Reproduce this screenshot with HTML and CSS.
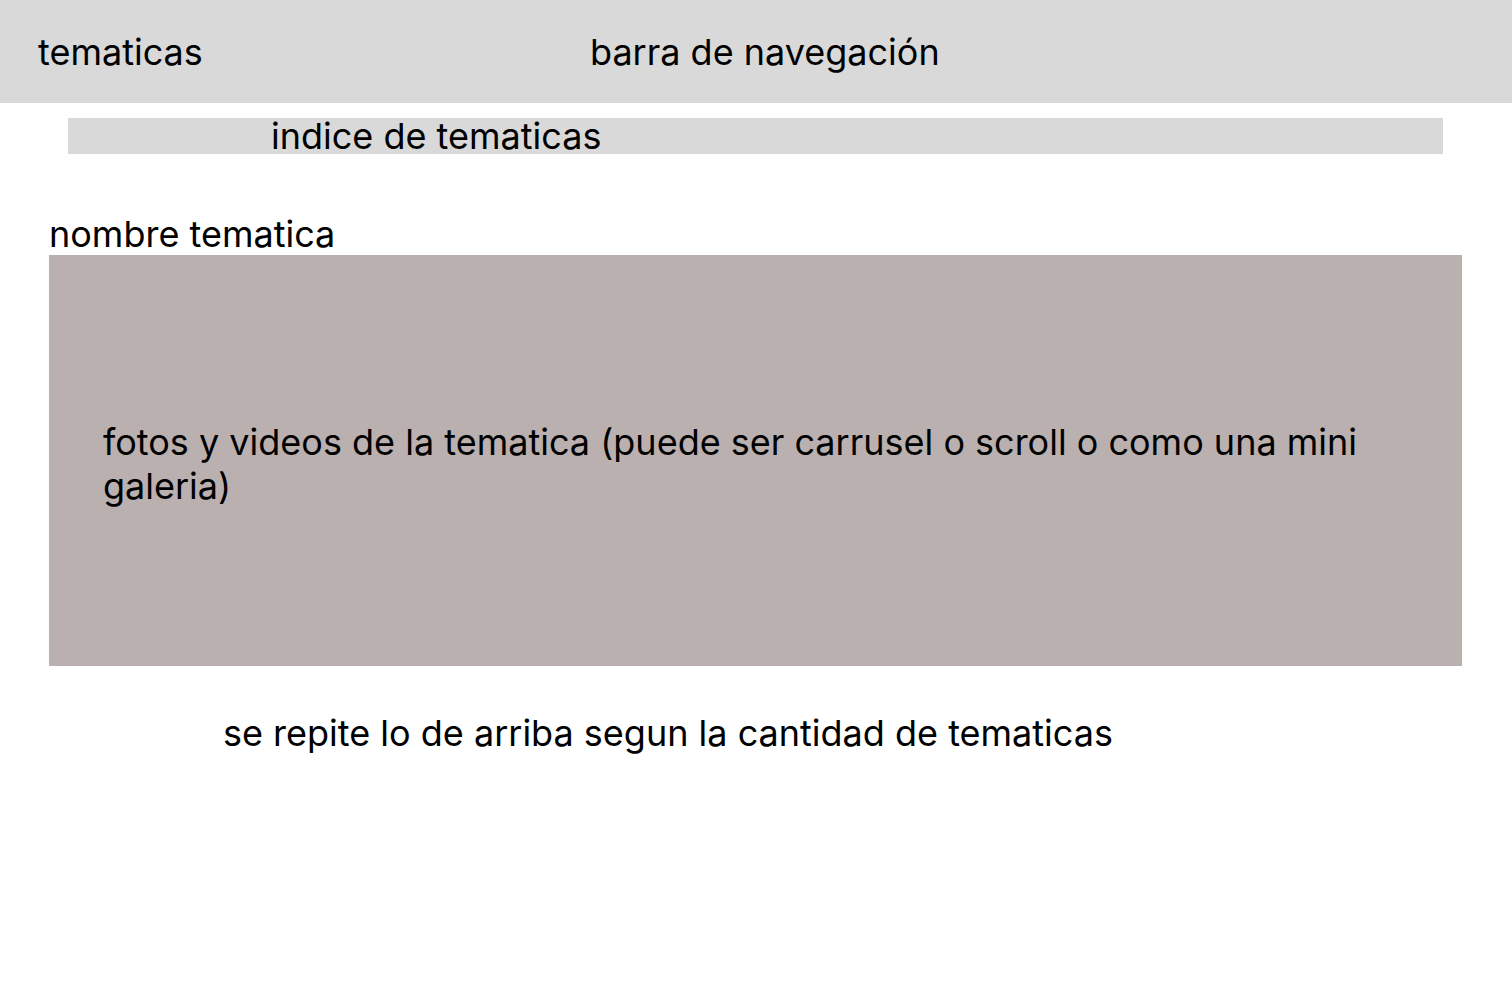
FILE: index.html
```html
<!DOCTYPE html>
<html lang="es">
<head>
<meta charset="utf-8">
<title>tematicas</title>
<link rel="stylesheet" href="styles.css">
</head>
<body>
<header class="navbar">
  <span class="nav-title">tematicas</span>
  <span class="nav-label">barra de navegación</span>
</header>
<nav class="index-bar">indice de tematicas</nav>
<section class="topic">
  <h2 class="topic-name">nombre tematica</h2>
  <div class="gallery">
    <p class="gallery-text">fotos y videos de la tematica (puede ser carrusel o scroll o como una mini galeria)</p>
  </div>
</section>
<p class="repeat-note">se repite lo de arriba segun la cantidad de tematicas</p>
</body>
</html>
```
FILE: styles.css
```css
html, body {
  margin: 0;
  padding: 0;
  background: #ffffff;
}
body {
  font-family: Inter, "Liberation Sans", sans-serif;
  font-size: 36px;
  line-height: normal;
  color: #000000;
  width: 1512px;
  height: 982px;
  overflow: hidden;
}
.navbar {
  display: flex;
  align-items: flex-start;
  height: 103px;
  box-sizing: border-box;
  padding: 30px 0 0 38px;
  background: #d9d9d9;
}
.nav-title {
  width: 552px;
}
.index-bar {
  margin: 15px 0 0 68px;
  width: 1375px;
  height: 36px;
  line-height: 36px;
  padding-left: 203px;
  box-sizing: border-box;
  background: #d9d9d9;
}
.topic {
  margin: 58px 0 0 49px;
}
.topic-name {
  margin: 0;
  font-size: 36px;
  font-weight: 400;
  height: 43px;
}
.gallery {
  width: 1413px;
  height: 411px;
  box-sizing: border-box;
  padding: 165px 0 0 54px;
  background: #bab0af;
}
.gallery-text {
  margin: 0;
  width: 1290px;
  line-height: 44px;
}
.repeat-note {
  margin: 45px 0 0 223px;
}
```
